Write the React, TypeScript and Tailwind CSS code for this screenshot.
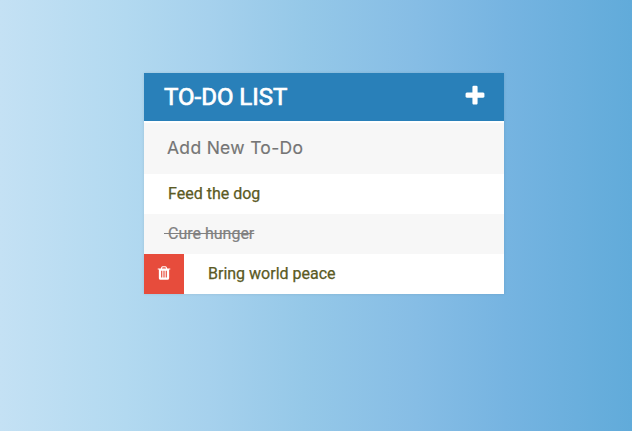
import React from "react";

const PLUS =
  "M1600 736v192q0 40-28 68t-68 28h-416v416q0 40-28 68t-68 28h-192q-40 0-68-28t-28-68v-416h-416q-40 0-68-28t-28-68v-192q0-40 28-68t68-28h416v-416q0-40 28-68t68-28h192q40 0 68 28t28 68v416h416q40 0 68 28t28 68z";
const TRASH =
  "M704 1376v-704q0-14-9-23t-23-9h-64q-14 0-23 9t-9 23v704q0 14 9 23t23 9h64q14 0 23-9t9-23zm256 0v-704q0-14-9-23t-23-9h-64q-14 0-23 9t-9 23v704q0 14 9 23t23 9h64q14 0 23-9t9-23zm256 0v-704q0-14-9-23t-23-9h-64q-14 0-23 9t-9 23v704q0 14 9 23t23 9h64q14 0 23-9t9-23zm-544-992h448l-48-117q-7-9-17-11h-317q-10 2-17 11zm928 32v64q0 14-9 23t-23 9h-96v948q0 83-47 143.500t-113 60.500h-832q-66 0-113-58.500t-47-141.500v-952h-96q-14 0-23-9t-9-23v-64q0-14 9-23t23-9h309l70-167q15-37 54-63t79-26h320q40 0 79 26t54 63l70 167h309q14 0 23 9t9 23z";

function Icon({ path, className }: { path: string; className: string }) {
  return (
    <svg viewBox="0 0 1792 1792" fill="currentColor" className={className} aria-hidden="true">
      <path d={path} />
    </svg>
  );
}

export default function App() {
  return (
    <main className="h-screen w-full overflow-hidden bg-[linear-gradient(to_right,#c4e1f4_0%,#b2d9f0_20%,#a6d1ed_33%,#95c8e8_48%,#86bde5_66%,#76b4e1_80%,#61abda_100%)] pt-[73px] pl-36 font-['Roboto',sans-serif]">
      <section className="w-[360px] bg-[#f7f7f7] shadow-[0_0_3px_rgba(0,0,0,0.1)]">
        <header className="flex h-12 items-center justify-between bg-[#2980b9] pr-[17px] pl-5 text-white">
          <h1 className="text-[24px] leading-[48px] font-normal [-webkit-text-stroke:0.7px_white]">TO-DO LIST</h1>
          <Icon path={PLUS} className="mb-[3px] size-6" />
        </header>
        <input
          aria-label="New to-do"
          placeholder="Add New To-Do"
          className="block h-[53px] w-full border-t-2 border-white bg-[#f7f7f7] pb-0.5 pl-[23px] font-['Inter',sans-serif] text-[17.5px] tracking-[0.3px] text-[#757575] outline-none [-webkit-text-stroke:0.15px_#757575] placeholder:text-[#757575]"
        />
        <ul className="text-[16px] leading-10 text-[#5b5a24]">
          <li className="h-10 bg-white pl-6 [-webkit-text-stroke:0.25px_currentColor]">Feed the dog</li>
          <li className="h-10 bg-[#f7f7f7] pl-5">
            <span className="whitespace-pre text-[#808080] line-through [-webkit-text-stroke:0.2px_currentColor]">{" Cure hunger"}</span>
          </li>
          <li className="flex h-10 bg-white">
            <span className="flex w-10 items-center justify-center bg-[#e74c3c] pb-[2px] text-white">
              <Icon path={TRASH} className="size-4" />
            </span>
            <span className="pl-6 [-webkit-text-stroke:0.25px_currentColor]">Bring world peace</span>
          </li>
        </ul>
      </section>
    </main>
  );
}
